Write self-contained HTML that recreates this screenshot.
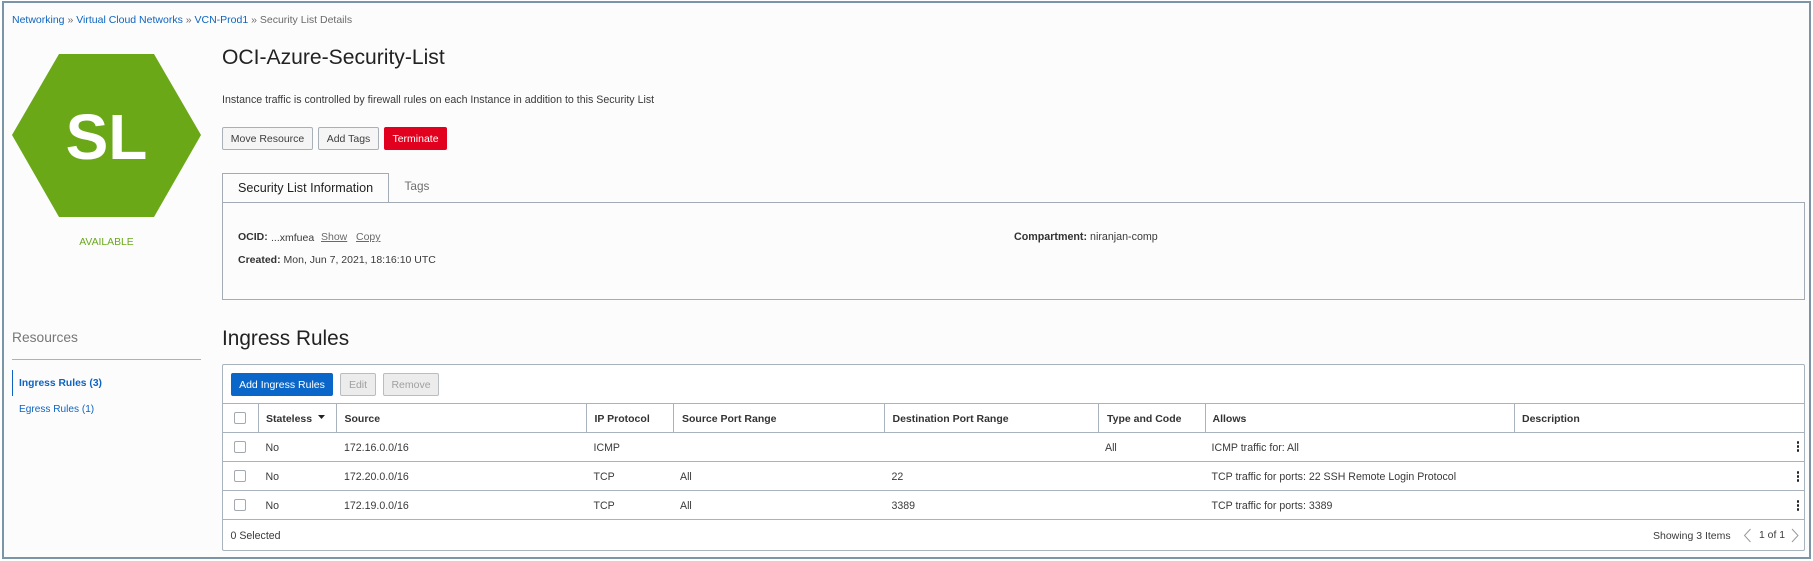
<!DOCTYPE html>
<html><head><meta charset="utf-8"><title>OCI-Azure-Security-List</title>
<style>
html,body{margin:0;padding:0;width:1813px;height:561px;overflow:hidden;background:#fff}
body{position:relative;font-family:"Liberation Sans",sans-serif;color:#3a3a3a;font-size:10.6px}
#w{position:absolute;left:0;top:0;width:1813px;height:561px;filter:blur(.35px)}
#f{position:absolute;left:2px;top:1px;width:1805px;height:554px;border:2px solid #7b95a6;background:#fcfcfc}
.t{position:absolute;white-space:nowrap;line-height:16px;height:16px}
.l{position:absolute;background:#a9b3bd}
.b{position:absolute;box-sizing:border-box;border:1px solid #a9b0b8;border-radius:2px;background:#f5f5f5;height:23px;line-height:23px;text-align:center;font-size:10.5px;color:#3e3e3e;white-space:nowrap}
.h{font-weight:bold;color:#333;font-size:10.5px}
.c{position:absolute;box-sizing:border-box;width:12px;height:12px;border:1px solid #a3a9af;border-radius:2px;background:#fff}
.k{position:absolute;left:1796.5px;width:2.5px;height:2.5px;border-radius:50%;background:#222;box-shadow:0 4px 0 #222,0 -4px 0 #222}
a{color:#0e64c0;text-decoration:none}
</style></head><body>
<div id="w">
<div id="f"></div>

<div class="t" style="left:12px;top:11.5px;font-size:10.5px;color:#6a6a6a"><a>Networking</a> » <a>Virtual Cloud Networks</a> » <a>VCN-Prod1</a> » Security List Details</div>

<svg style="position:absolute;left:12px;top:54px" width="189" height="163"><polygon points="0,81 47,0 142,0 189,81 142,163 47,163" fill="#6aa818"/></svg>
<div class="t" style="left:12px;width:189px;top:105px;height:64px;line-height:64px;font-size:64px;font-weight:bold;color:#fff;text-align:center">SL</div>
<div class="t" style="left:12px;width:189px;top:234.5px;text-align:center;font-size:10.4px;color:#6aa81e">AVAILABLE</div>

<div class="t" style="left:222px;top:45px;height:26px;line-height:26px;font-size:21.1px;color:#222">OCI-Azure-Security-List</div>
<div class="t" style="left:222px;top:92px;font-size:10.63px;color:#3a3a3a">Instance traffic is controlled by firewall rules on each Instance in addition to this Security List</div>

<div class="b" style="left:222px;top:127px;width:91px">Move Resource</div>
<div class="b" style="left:318px;top:127px;width:61px">Add Tags</div>
<div class="b" style="left:384px;top:127px;width:63px;background:#e2001f;border-color:#e2001f;color:#fff">Terminate</div>

<div style="position:absolute;left:222px;top:202px;width:1583px;height:98px;box-sizing:border-box;border:1px solid #a3acb4;background:#fcfcfc"></div>
<div style="position:absolute;left:222px;top:173px;width:167px;height:30px;box-sizing:border-box;border:1px solid #a3acb4;background:#fcfcfc"></div>
<div class="t" style="left:238px;top:179.5px;font-size:12.6px;color:#222">Security List Information</div>
<div class="t" style="left:404.5px;top:178px;font-size:11.8px;color:#6f6f6f">Tags</div>

<div class="t" style="left:238px;top:229px;font-size:10.5px"><b style="color:#333">OCID:</b></div>
<div class="t" style="left:271px;top:230px;font-size:10.5px">...xmfuea</div>
<div class="t" style="left:321px;top:229px;font-size:10.5px;color:#6a6a6a;text-decoration:underline">Show</div>
<div class="t" style="left:356px;top:229px;font-size:10.5px;color:#6a6a6a;text-decoration:underline">Copy</div>
<div class="t" style="left:238px;top:251.5px;font-size:10.5px"><b style="color:#333">Created:</b> Mon, Jun 7, 2021, 18:16:10 UTC</div>
<div class="t" style="left:1014px;top:228.5px;font-size:10.7px"><b style="color:#333">Compartment:</b> niranjan-comp</div>

<div class="t" style="left:12px;top:330px;font-size:13.8px;color:#777">Resources</div>
<div class="l" style="left:12px;top:359px;width:189px;height:1px"></div>
<div class="l" style="left:12px;top:370px;width:1px;height:26px;background:#0e64c0"></div>
<div class="t" style="left:19px;top:375.5px;font-size:10.3px;font-weight:bold;color:#0e64c0">Ingress Rules (3)</div>
<div class="t" style="left:19px;top:401.5px;font-size:10.1px;color:#0e64c0">Egress Rules (1)</div>

<div class="t" style="left:222px;top:325.5px;height:26px;line-height:26px;font-size:20.8px;color:#222">Ingress Rules</div>

<div style="position:absolute;left:222px;top:364px;width:1583px;height:187px;box-sizing:border-box;border:1px solid #a9b3bd;border-radius:2px;background:#fff"></div>
<div class="b" style="left:231px;top:373px;width:102px;background:#0a66c8;border-color:#0a66c8;color:#fff">Add Ingress Rules</div>
<div class="b" style="left:340px;top:373px;width:36px;background:#ececec;border-color:#b8bdc2;color:#a0a0a0">Edit</div>
<div class="b" style="left:383px;top:373px;width:56px;background:#ececec;border-color:#b8bdc2;color:#a0a0a0">Remove</div>

<div class="l" style="left:222px;top:403px;width:1583px;height:1px"></div>
<div class="l" style="left:222px;top:432px;width:1583px;height:1px"></div>
<div class="l" style="left:222px;top:461px;width:1583px;height:1px"></div>
<div class="l" style="left:222px;top:490px;width:1583px;height:1px"></div>
<div class="l" style="left:222px;top:519px;width:1583px;height:1px"></div>
<div class="l" style="left:258px;top:403px;width:1px;height:29px"></div>
<div class="l" style="left:336px;top:403px;width:1px;height:29px"></div>
<div class="l" style="left:586px;top:403px;width:1px;height:29px"></div>
<div class="l" style="left:673px;top:403px;width:1px;height:29px"></div>
<div class="l" style="left:884px;top:403px;width:1px;height:29px"></div>
<div class="l" style="left:1098px;top:403px;width:1px;height:29px"></div>
<div class="l" style="left:1205px;top:403px;width:1px;height:29px"></div>
<div class="l" style="left:1514px;top:403px;width:1px;height:29px"></div>

<div class="c" style="left:234px;top:412px"></div>
<div class="t h" style="left:266px;top:410.5px">Stateless</div>
<svg style="position:absolute;left:318px;top:415px" width="7" height="4"><polygon points="0,0 7,0 3.5,4" fill="#222"/></svg>
<div class="t h" style="left:344.5px;top:410.5px">Source</div>
<div class="t h" style="left:594.5px;top:410.5px">IP Protocol</div>
<div class="t h" style="left:682px;top:410.5px">Source Port Range</div>
<div class="t h" style="left:892.5px;top:410.5px">Destination Port Range</div>
<div class="t h" style="left:1107px;top:410.5px">Type and Code</div>
<div class="t h" style="left:1212.5px;top:410.5px">Allows</div>
<div class="t h" style="left:1522px;top:410.5px">Description</div>

<div class="c" style="left:234px;top:441px"></div>
<div class="t" style="left:265.5px;top:439.5px">No</div>
<div class="t" style="left:344px;top:439.5px">172.16.0.0/16</div>
<div class="t" style="left:593.5px;top:439.5px">ICMP</div>
<div class="t" style="left:1105px;top:439.5px">All</div>
<div class="t" style="left:1211.5px;top:439.5px">ICMP traffic for: All</div>
<div class="k" style="top:445px"></div>

<div class="c" style="left:234px;top:470px"></div>
<div class="t" style="left:265.5px;top:468.5px">No</div>
<div class="t" style="left:344px;top:468.5px">172.20.0.0/16</div>
<div class="t" style="left:593.5px;top:468.5px">TCP</div>
<div class="t" style="left:680px;top:468.5px">All</div>
<div class="t" style="left:891.5px;top:468.5px">22</div>
<div class="t" style="left:1211.5px;top:468.5px">TCP traffic for ports: 22 SSH Remote Login Protocol</div>
<div class="k" style="top:475px"></div>

<div class="c" style="left:234px;top:499px"></div>
<div class="t" style="left:265.5px;top:497.5px">No</div>
<div class="t" style="left:344px;top:497.5px">172.19.0.0/16</div>
<div class="t" style="left:593.5px;top:497.5px">TCP</div>
<div class="t" style="left:680px;top:497.5px">All</div>
<div class="t" style="left:891.5px;top:497.5px">3389</div>
<div class="t" style="left:1211.5px;top:497.5px">TCP traffic for ports: 3389</div>
<div class="k" style="top:504px"></div>

<div class="t" style="left:230.5px;top:527.5px">0 Selected</div>
<div class="t" style="left:1653px;top:527.5px;font-size:10.5px">Showing 3 Items</div>
<svg style="position:absolute;left:1743px;top:528px" width="10" height="15"><path d="M7.5 1L1.5 7.5L7.5 14" fill="none" stroke="#9a9a9a" stroke-width="1"/></svg>
<div class="t" style="left:1759px;top:527.5px;font-size:10.4px">1 of 1</div>
<svg style="position:absolute;left:1790px;top:528px" width="10" height="15"><path d="M2 1L8 7.5L2 14" fill="none" stroke="#9a9a9a" stroke-width="1"/></svg>
</div>
</body></html>
